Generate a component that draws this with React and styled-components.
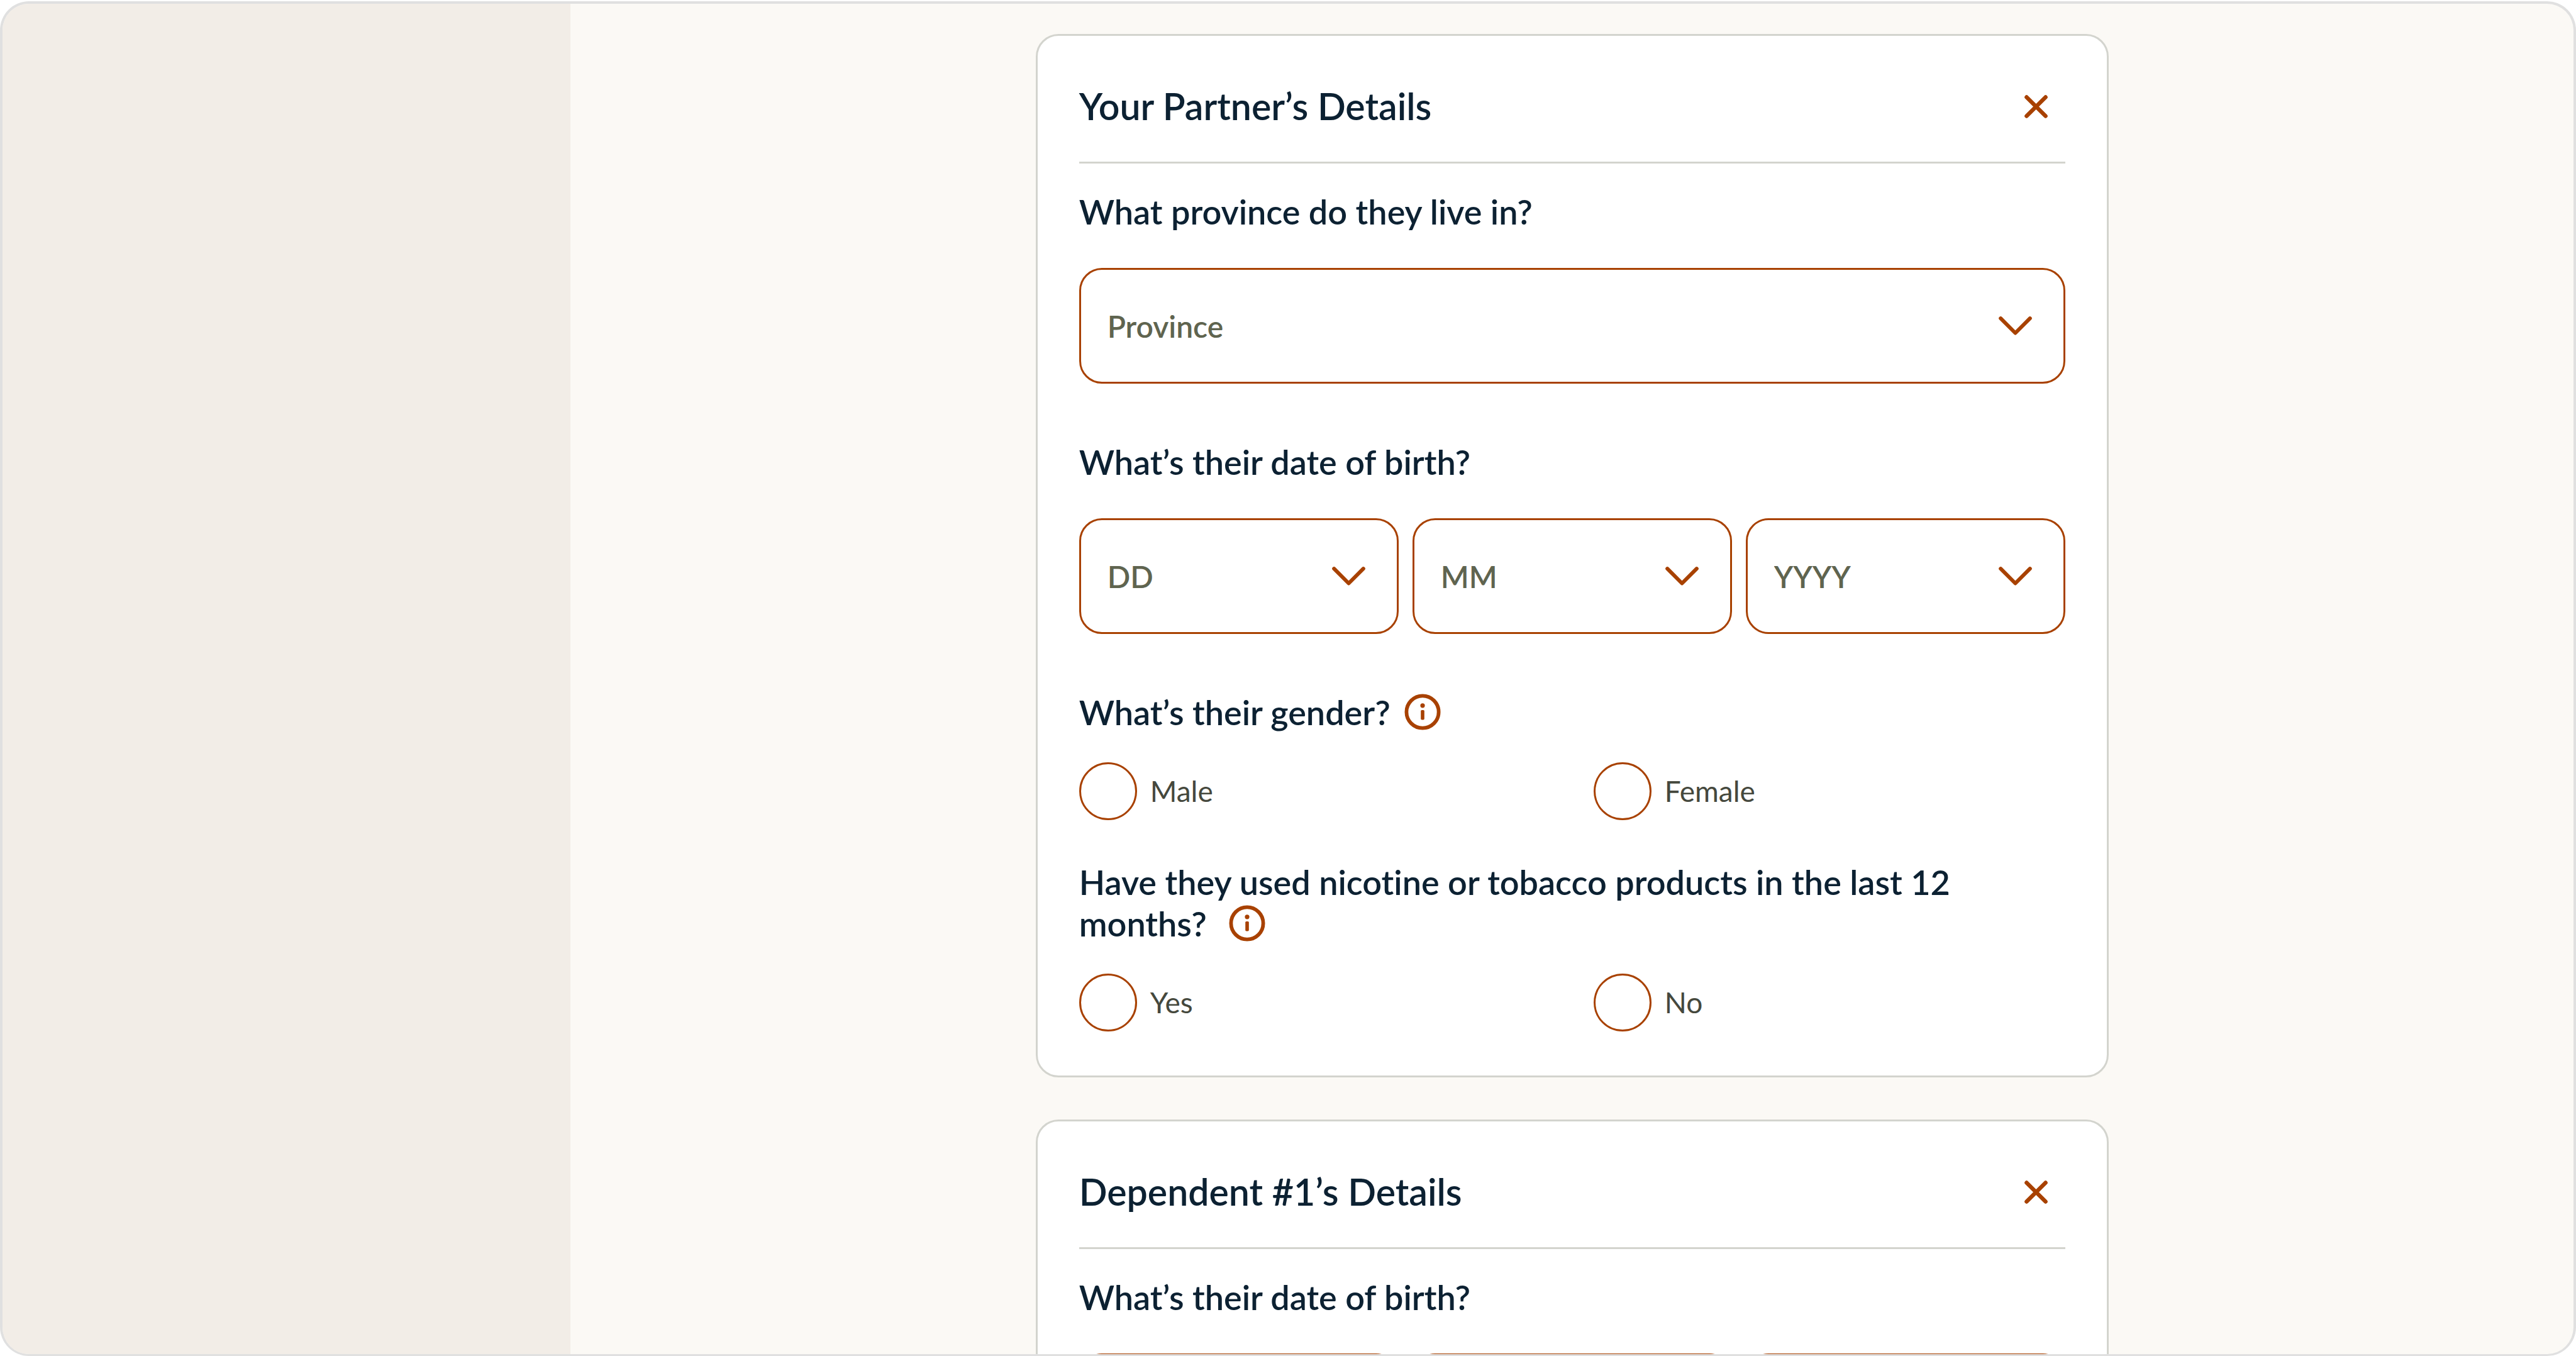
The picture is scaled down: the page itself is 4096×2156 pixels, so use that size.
import React from 'react';
import styled, { createGlobalStyle } from 'styled-components';

const RUST = '#a84100';
const NAVY = '#0c2132';
const LINE = '#d3d4ce';

const GlobalStyle = createGlobalStyle`
  *, *::before, *::after {
    box-sizing: border-box;
  }

  body {
    margin: 0;
    background: #ffffff;
    color: ${NAVY};
    font-family: Lato, 'Open Sans', sans-serif;
    font-variant-ligatures: none;
  }
`;

const Page = styled.div`
  height: 100vh;
  padding-top: 2px;
`;

const Frame = styled.div`
  display: flex;
  height: 100%;
  overflow: hidden;
  border: 4px solid #e0e0e0;
  border-bottom-width: 3px;
  border-radius: 46px;
  background: #fbf9f5;
`;

const Sidebar = styled.aside`
  flex: none;
  width: 22.1%;
  background: #f2ede7;
`;

const Main = styled.main`
  flex: 1;
  display: flex;
  flex-direction: column;
  align-items: center;
  gap: 67px;
  padding-top: 48px;
`;

const Card = styled.section`
  flex: none;
  width: 100%;
  max-width: 1706px;
  padding: 0 66px 70px;
  border: 3px solid ${LINE};
  border-radius: 36px;
  background: #ffffff;
`;

const CardHeader = styled.header`
  display: flex;
  align-items: center;
  justify-content: space-between;
  padding: 66px 0 42px;
  border-bottom: 3px solid ${LINE};
  margin-bottom: 44px;
`;

const CardTitle = styled.h2`
  margin: 0;
  font-size: 59px;
  font-weight: 600;
  line-height: 72px;
`;

const CloseButton = styled.button`
  display: flex;
  align-items: center;
  justify-content: center;
  width: 92px;
  height: 92px;
  padding: 0;
  border: 0;
  background: none;
  cursor: pointer;
`;

const Field = styled.fieldset`
  min-width: 0;
  margin: 0 0 ${(props) => (props.$compact ? 66 : 92)}px;
  padding: 0;
  border: 0;

  &:last-child {
    margin-bottom: 0;
  }
`;

const Question = styled.legend`
  display: block;
  padding: 0;
  margin-bottom: ${(props) => (props.$compact ? 46 : 56)}px;
  font-size: 54px;
  font-weight: 600;
  line-height: 66px;
`;

const InfoButton = styled.button`
  display: inline-block;
  height: 58px;
  margin-left: 22px;
  padding: 0;
  border: 0;
  background: none;
  line-height: 0;
  vertical-align: -8px;
  cursor: pointer;
`;

const SelectRow = styled.div`
  display: grid;
  grid-template-columns: repeat(${(props) => props.$columns}, 1fr);
  gap: 22px;
`;

const SelectBox = styled.div`
  display: grid;
  align-items: center;

  > * {
    grid-area: 1 / 1;
  }

  > svg {
    justify-self: end;
    margin-right: 53px;
    pointer-events: none;
  }
`;

const Select = styled.select`
  appearance: none;
  width: 100%;
  height: 184px;
  padding: 0 120px 0 42px;
  border: 3px solid ${RUST};
  border-radius: 36px;
  background: #ffffff;
  color: #5f644f;
  font-family: inherit;
  font-size: 48px;
  font-weight: 600;
`;

const RadioRow = styled.div`
  display: grid;
  grid-template-columns: 1fr 1fr;
  gap: 68px;
`;

const RadioLabel = styled.label`
  display: flex;
  align-items: center;
  gap: 21px;
  color: #45483d;
  font-size: 46px;
  line-height: 60px;
`;

const Radio = styled.input`
  appearance: none;
  flex: none;
  width: 92px;
  height: 92px;
  margin: 0;
  border: 3px solid ${RUST};
  border-radius: 50%;
  background: #ffffff;

  &:checked {
    background: ${RUST};
    box-shadow: inset 0 0 0 18px #ffffff;
  }
`;

const CloseIcon = () => (
  <svg width="37" height="37" viewBox="0 0 37 37" aria-hidden="true">
    <path
      d="M3.4 3.4 L33.6 33.6 M33.6 3.4 L3.4 33.6"
      fill="none"
      stroke={RUST}
      strokeWidth="6.4"
      strokeLinecap="round"
    />
  </svg>
);

const ChevronIcon = () => (
  <svg width="53" height="30" viewBox="0 0 53 30" aria-hidden="true">
    <path
      d="M3.2 3.2 L26.5 26.5 L49.8 3.2"
      fill="none"
      stroke={RUST}
      strokeWidth="6"
      strokeLinecap="round"
      strokeLinejoin="round"
    />
  </svg>
);

const InfoIcon = () => (
  <svg width="58" height="58" viewBox="0 0 58 58" aria-hidden="true">
    <circle cx="29" cy="29" r="25.6" fill="none" stroke={RUST} strokeWidth="5.8" />
    <circle cx="29" cy="18.8" r="3.6" fill={RUST} />
    <rect x="26.2" y="26" width="5.6" height="15.4" rx="1.6" fill={RUST} />
  </svg>
);

function SelectField({ question, options }) {
  return (
    <Field>
      <Question>{question}</Question>
      <SelectRow $columns={options.length}>
        {options.map((option) => (
          <SelectBox key={option}>
            <Select aria-label={option} defaultValue="">
              <option value="">{option}</option>
            </Select>
            <ChevronIcon />
          </SelectBox>
        ))}
      </SelectRow>
    </Field>
  );
}

function RadioField({ name, question, options }) {
  return (
    <Field $compact>
      <Question $compact>
        {question}
        <InfoButton type="button" aria-label="More information">
          <InfoIcon />
        </InfoButton>
      </Question>
      <RadioRow>
        {options.map((option) => (
          <RadioLabel key={option}>
            <Radio type="radio" name={name} value={option} />
            {option}
          </RadioLabel>
        ))}
      </RadioRow>
    </Field>
  );
}

function DetailsCard({ title, children }) {
  return (
    <Card>
      <CardHeader>
        <CardTitle>{title}</CardTitle>
        <CloseButton type="button" aria-label="Remove">
          <CloseIcon />
        </CloseButton>
      </CardHeader>
      {children}
    </Card>
  );
}

const DATE_PARTS = ['DD', 'MM', 'YYYY'];

function App() {
  return (
    <Page>
      <GlobalStyle />
      <Frame>
        <Sidebar />
        <Main>
          <DetailsCard title="Your Partner’s Details">
            <SelectField question="What province do they live in?" options={['Province']} />
            <SelectField question="What’s their date of birth?" options={DATE_PARTS} />
            <RadioField
              name="gender"
              question="What’s their gender?"
              options={['Male', 'Female']}
            />
            <RadioField
              name="nicotine"
              question="Have they used nicotine or tobacco products in the last 12 months? "
              options={['Yes', 'No']}
            />
          </DetailsCard>

          <DetailsCard title="Dependent #1’s Details">
            <SelectField question="What’s their date of birth?" options={DATE_PARTS} />
          </DetailsCard>
        </Main>
      </Frame>
    </Page>
  );
}

export default App;
